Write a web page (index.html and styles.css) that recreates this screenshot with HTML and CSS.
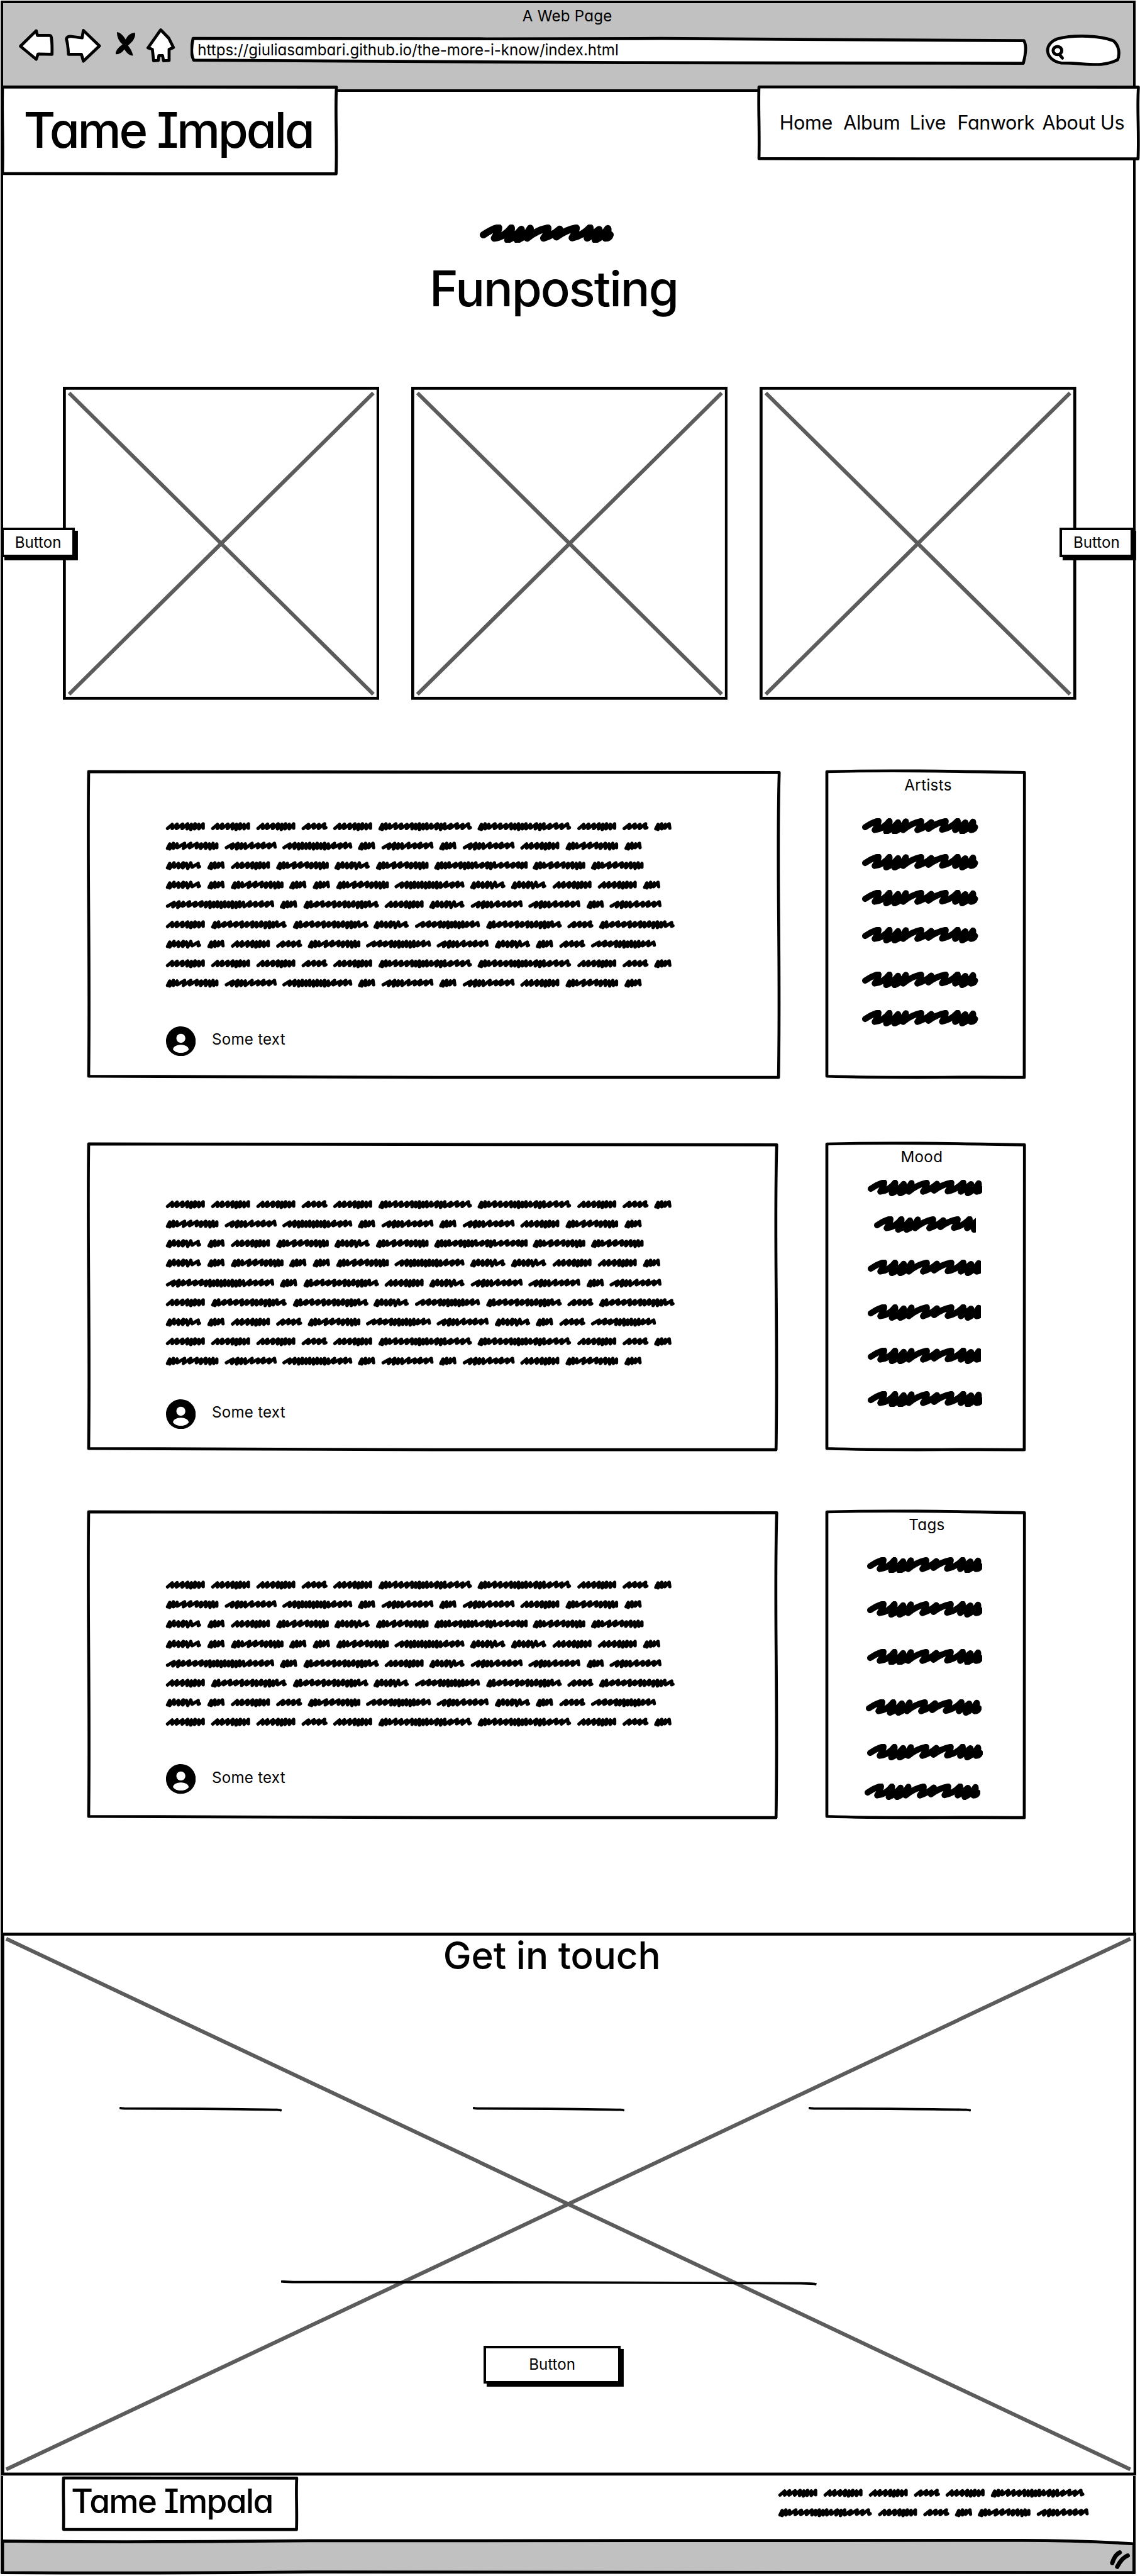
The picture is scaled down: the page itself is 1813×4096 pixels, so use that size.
FILE: index.html
```html
<!DOCTYPE html>
<html lang="en">
<head>
<meta charset="utf-8">
<title>A Web Page</title>
<link rel="stylesheet" href="styles.css">
</head>
<body>
<svg class="defs" aria-hidden="true">
  <defs>
    <symbol id="box" viewBox="0 0 100 100" preserveAspectRatio="none">
      <path class="ink-box" d="M0 .2C30 -.3 60 0 100 .5C99.6 30 100.2 60 99.9 100C60 99.7 40 100.4 0 99.6C.2 60 -.2 30 0 .2Z"/>
    </symbol>
    <symbol id="photo" viewBox="0 0 511 505" preserveAspectRatio="none">
      <path class="cross" d="M10 10L501 496M501 10L10 496"/>
      <rect class="frame" x="2.4" y="2.4" width="506.2" height="500.2"/>
    </symbol>
    <symbol id="rule" viewBox="0 0 100 8" preserveAspectRatio="none">
      <path class="rule-ink" d="M0 1.5Q1 2.5 3 2.7L50 3.2Q90 4.2 97 4.8Q99.5 5 100 6.5"/>
    </symbol>
    <symbol id="user" viewBox="2 2 20 20">
      <path d="M12 2C6.48 2 2 6.48 2 12s4.48 10 10 10 10-4.48 10-10S17.52 2 12 2zm0 5c1.66 0 3 1.34 3 3s-1.34 3-3 3-3-1.34-3-3 1.34-3 3-3zm0 12.8c-2.4 0-4.2-.9-5.3-2.3.2-1.9 2.5-3.1 5.3-3.1s5.1 1.2 5.3 3.1c-1.1 1.400-2.900 2.300-5.300 2.300z"/>
    </symbol>
    <path id="scrawl" class="scrawl-ink" d="M5.700 16.700Q22 6 30.600 5Q31 10 23.500 22Q40 20 51 5.300Q52 12 45 25Q57 20 67 7.700Q68 12 60.500 25Q74 20 81.500 6Q82 12 76.500 22Q92 9 110 5.500Q111 11 103 22Q117 18 129 7.500Q129 12 123.600 20Q140 8 155.800 5.500Q156 10 149 21.500Q166 18 178 5Q179 12 173.400 22Q184 16 192.500 8Q193 14 186.400 25Q198 20 206.700 6.500Q208 12 202.800 22Q209 22 210.500 16.500"/>
    <path id="wa" class="word" d="M2.500 10.500L10 4 10 10.500 18 3.500 17 10.500 27 3.500 26 10.500 35 3 34 11 41 4 40 12 47 3 46 11 53 4 53 11 60 3 60 10"/>
    <path id="wb" class="word" d="M2.500 10.500L11 4 10 10.500 20 3.500 19 10 28 4 27 10.500 37 3 36 10 39 9"/>
    <path id="wc" class="word" d="M2.500 11L6 4 6 12 12 3 12 11 18 4 18 10 28 3 27 10.500 37 3.500 36 10.500 46 4 45 10.500 54 3 54 11 60 4 60 11 66 3 66 12 72 4 72 11 78 3 78 11 85 4 85 10 95 3 93 11 101 4 100 12 107 3 107 11 117 4 115 10.500 127 3 126 10 136 4 135 10.500 145 3 146 10 148 9"/>
    <path id="wd" class="word" d="M2.500 11L6 4 6 12 12 3 12 11 18 4 18 10 30 3 28 11 40 3 38 10 50 3 49 10 57 4 56 11 64 3 64 11 70 4 71 12 76 3 77 11 82 4 82 10"/>
    <path id="we" class="word" d="M2.500 10L13 4 11 11 21 3 19 12 27 4 26 11 33 4 33 11 44 3 43 10 54 4 53 10 63 3 61 10 72 4 71 10 80 3 81 9"/>
    <path id="wf" class="word" d="M2.500 10L12 4 11 10.500 20 3 19 11 26 4 26 12 32 3 32 11 38 4 38 11 44 3 44 11 50 4 50 12 56 3 56 11 62 4 62 11 68 3 68 12 74 4 74 11 84 3 82 10 94 4 92 10.500 102 3 101 10 109 4 110 9"/>
    <path id="wg" class="word" d="M2.500 11L6 4 6 12 12 3 12 11 18 4 17 10 24 3 25 10"/>
    <path id="wh" class="word" d="M2.500 11L6 4 6 12 13 3 13 10 20 4 20 11 28 3 27 11 33 4 35 12 40 3 42 10 52 4 52 10 54 9"/>
    <path id="wi" class="word" d="M2.500 11L6 4 6 12 12 3 12 11 18 4 18 11 24 3 24 10 35 4 33 10 43 3 42 11 49 4 49 12 55 3 55 11 61 4 61 11 67 3 68 10 78 4 76 10 86 3 85 11 91 4 91 12 97 3 98 10 108 4 107 10 118 3 117 10 128 4 126 10 136 3 135 10 142 4 141 11 148 3 148 10"/>
    <path id="wj" class="word" d="M2.500 10L13 4 11 11 21 3 19 12 28 4 27 10 38 3 36 10 48 4 46 10 58 3 56 10 65 4 64 11 71 3 71 12 77 4 77 11 83 3 83 11 89 4 89 12 95 3 95 11 101 4 101 11 107 3 107 12 113 4 113 12 119 3 119 11 125 4 126 11 136 3 134 10 145 4 144 10 155 3 153 10 164 4 162 10 171 3 172 9"/>
    <path id="wk" class="word" d="M2.500 11L6 4 6 12 12 3 12 11 22 4 20 10 31 3 30 10 41 4 39 10 50 3 49 11 58 4 57 10 67 3 66 11 73 4 73 11 81 3 80 10 88 4 87 12 94 3 94 12 100 4 100 11 106 3 107 10 117 4 117 10 119 9"/>
    <path id="wl" class="word" d="M2.500 10L13 4 12 10 23 3 21 10 32 4 30 10 41 3 40 11 47 4 46 11 53 3 53 12 59 4 59 11 65 3 65 11 71 4 71 12 77 3 77 11 84 4 83 10 93 3 92 10 101 4 102 9"/>
    <g id="line1"><use href="#wa"/><use href="#wa" x="73"/><use href="#wa" x="146"/><use href="#wb" x="219"/><use href="#wa" x="270"/><use href="#wc" x="343"/><use href="#wc" x="503"/><use href="#wa" x="664"/><use href="#wb" x="737"/><use href="#wg" x="788"/></g>
    <g id="line2"><use href="#wd"/><use href="#we" x="95"/><use href="#wf" x="188"/><use href="#wg" x="310"/><use href="#we" x="348"/><use href="#wg" x="441"/><use href="#we" x="479"/><use href="#wa" x="572"/><use href="#wd" x="645"/><use href="#wg" x="740"/></g>
    <g id="line3"><use href="#wh"/><use href="#wg" x="67"/><use href="#wa" x="105"/><use href="#wd" x="178"/><use href="#wh" x="272"/><use href="#wd" x="339"/><use href="#wi" x="433"/><use href="#wd" x="592"/><use href="#wd" x="686"/></g>
    <g id="line4"><use href="#wh"/><use href="#wg" x="67"/><use href="#wd" x="105"/><use href="#wg" x="199"/><use href="#wg" x="237"/><use href="#wd" x="275"/><use href="#wf" x="369"/><use href="#wh" x="491"/><use href="#wh" x="557"/><use href="#wa" x="624"/><use href="#wa" x="697"/><use href="#wg" x="770"/></g>
    <g id="line5"><use href="#wj"/><use href="#wg" x="184"/><use href="#wk" x="222"/><use href="#wa" x="353"/><use href="#wh" x="425"/><use href="#we" x="492"/><use href="#we" x="585"/><use href="#wg" x="679"/><use href="#we" x="716"/></g>
    <g id="line6"><use href="#wa"/><use href="#wk" x="73"/><use href="#wk" x="205"/><use href="#wh" x="335"/><use href="#wl" x="402"/><use href="#wk" x="517"/><use href="#wb" x="648"/><use href="#wk" x="699"/></g>
    <g id="line7"><use href="#wh"/><use href="#wg" x="67"/><use href="#wa" x="105"/><use href="#wb" x="178"/><use href="#wd" x="229"/><use href="#wl" x="323"/><use href="#we" x="437"/><use href="#wh" x="531"/><use href="#wg" x="597"/><use href="#wb" x="635"/><use href="#wl" x="686"/></g>
  </defs>
</svg>

<div class="window">
  <header class="chrome">
    <div class="window-title">A Web Page</div>
    <div class="toolbar">
      <svg class="tool back" viewBox="30 44 60 64"><path class="icon" d="M33.500 75L59 50L61 57.500L80 57.500Q83 57.500 83.500 61Q85 72 84.500 88L62 87.500L59 96Z"/></svg>
      <svg class="tool forward" viewBox="104 44 62 64"><path class="icon" d="M111 88Q110 70 107.500 63Q109 59 114 59L133 61.500L135 49.500L161 74.500L135 99L132 88Z"/></svg>
      <svg class="tool stop" viewBox="185 44 38 64"><path d="M190 52Q198 53 204 64Q209 54 219 53Q221 59 215 67L208 74Q214 81 216 90Q209 91 202 80Q197 88 188 88Q187 81 199 72Q190 64 190 52Z"/></svg>
      <svg class="tool home" viewBox="235 44 50 64"><path class="icon" d="M260 48.500L239.500 77.500L246.500 80L248.500 98.500L256 98L257 90L263 90L264.500 98.500L273.500 98L273.500 80L280.500 77L273 62Z"/></svg>
      <div class="address">
        <svg class="address-box" viewBox="0 0 1352 64"><path class="icon" d="M4 18.500C300 18 500 20 760 18.500Q1000 19 1345 22Q1351 32 1344 58.500L700 57.500Q400 57 5 53.500Q-1 42 4 18.500Z"/></svg>
        <span class="url">https://giuliasambari.github.io/the-more-i-know/index.html</span>
      </div>
      <svg class="tool search" viewBox="1687 44 123 64"><path class="icon" d="M1713 102C1686 97 1684 71 1707 63C1735 56 1776 58 1797 66C1807 74 1808 88 1804 97C1778 110 1755 102 1713 102Z"/><ellipse class="lens" cx="1707" cy="82" rx="7" ry="6.500"/><path class="lens" d="M1710 88L1715 94"/></svg>
    </div>
  </header>

  <header class="site-header">
    <div class="panel logo"><svg class="sketch"><use href="#box"/></svg><span class="logo-text">Tame Impala</span></div>
    <nav class="panel nav"><svg class="sketch"><use href="#box"/></svg>
      <a>Home</a><a>Album</a><a>Live</a><a>Fanwork</a><a>About Us</a>
    </nav>
  </header>

  <section class="intro">
    <svg class="scrawl" viewBox="0 0 216 30"><use href="#scrawl"/></svg>
    <h1>Funposting</h1>
  </section>

  <section class="gallery">
    <svg class="photo"><use href="#photo"/></svg>
    <svg class="photo"><use href="#photo"/></svg>
    <svg class="photo"><use href="#photo"/></svg>
    <div class="button prev"><span>Button</span></div>
    <div class="button next"><span>Button</span></div>
  </section>

  <main class="posts">
    <article class="panel post post-1"><svg class="sketch"><use href="#box"/></svg>
      <div class="lines">
        <svg viewBox="0 0 830 14"><use href="#line1"/></svg>
        <svg viewBox="0 0 830 14"><use href="#line2"/></svg>
        <svg viewBox="0 0 830 14"><use href="#line3"/></svg>
        <svg viewBox="0 0 830 14"><use href="#line4"/></svg>
        <svg viewBox="0 0 830 14"><use href="#line5"/></svg>
        <svg viewBox="0 0 830 14"><use href="#line6"/></svg>
        <svg viewBox="0 0 830 14"><use href="#line7"/></svg>
        <svg viewBox="0 0 830 14"><use href="#line1"/></svg>
        <svg viewBox="0 0 830 14"><use href="#line2"/></svg>
      </div>
      <div class="author"><svg><use href="#user"/></svg><span>Some text</span></div>
    </article>
    <aside class="panel side artists"><svg class="sketch"><use href="#box"/></svg>
      <h2>Artists</h2>
      <div class="links">
        <svg viewBox="0 0 216 30"><use href="#scrawl"/></svg>
        <svg viewBox="0 0 216 30"><use href="#scrawl"/></svg>
        <svg viewBox="0 0 216 30"><use href="#scrawl"/></svg>
        <svg viewBox="0 0 216 30"><use href="#scrawl"/></svg>
        <svg viewBox="0 0 216 30"><use href="#scrawl"/></svg>
        <svg viewBox="0 0 216 30"><use href="#scrawl"/></svg>
      </div>
    </aside>

    <article class="panel post post-2"><svg class="sketch"><use href="#box"/></svg>
      <div class="lines">
        <svg viewBox="0 0 830 14"><use href="#line1"/></svg>
        <svg viewBox="0 0 830 14"><use href="#line2"/></svg>
        <svg viewBox="0 0 830 14"><use href="#line3"/></svg>
        <svg viewBox="0 0 830 14"><use href="#line4"/></svg>
        <svg viewBox="0 0 830 14"><use href="#line5"/></svg>
        <svg viewBox="0 0 830 14"><use href="#line6"/></svg>
        <svg viewBox="0 0 830 14"><use href="#line7"/></svg>
        <svg viewBox="0 0 830 14"><use href="#line1"/></svg>
        <svg viewBox="0 0 830 14"><use href="#line2"/></svg>
      </div>
      <div class="author"><svg><use href="#user"/></svg><span>Some text</span></div>
    </article>
    <aside class="panel side mood"><svg class="sketch"><use href="#box"/></svg>
      <h2>Mood</h2>
      <div class="links">
        <svg viewBox="0 0 213 30"><use href="#scrawl"/></svg>
        <svg class="short" viewBox="0 0 190 30"><use href="#scrawl"/></svg>
        <svg viewBox="0 0 211 30"><use href="#scrawl"/></svg>
        <svg viewBox="0 0 211 30"><use href="#scrawl"/></svg>
        <svg viewBox="0 0 211 30"><use href="#scrawl"/></svg>
        <svg viewBox="0 0 213 30"><use href="#scrawl"/></svg>
      </div>
    </aside>

    <article class="panel post post-3"><svg class="sketch"><use href="#box"/></svg>
      <div class="lines">
        <svg viewBox="0 0 830 14"><use href="#line1"/></svg>
        <svg viewBox="0 0 830 14"><use href="#line2"/></svg>
        <svg viewBox="0 0 830 14"><use href="#line3"/></svg>
        <svg viewBox="0 0 830 14"><use href="#line4"/></svg>
        <svg viewBox="0 0 830 14"><use href="#line5"/></svg>
        <svg viewBox="0 0 830 14"><use href="#line6"/></svg>
        <svg viewBox="0 0 830 14"><use href="#line7"/></svg>
        <svg viewBox="0 0 830 14"><use href="#line1"/></svg>
      </div>
      <div class="author"><svg><use href="#user"/></svg><span>Some text</span></div>
    </article>
    <aside class="panel side tags"><svg class="sketch"><use href="#box"/></svg>
      <h2>Tags</h2>
      <div class="links">
        <svg viewBox="0 0 215 30"><use href="#scrawl"/></svg>
        <svg viewBox="0 0 215 30"><use href="#scrawl"/></svg>
        <svg viewBox="0 0 215 30"><use href="#scrawl"/></svg>
        <svg class="nudge" viewBox="0 0 216 30"><use href="#scrawl"/></svg>
        <svg viewBox="0 0 216 30"><use href="#scrawl"/></svg>
        <svg class="nudge-more" viewBox="0 0 216 30"><use href="#scrawl"/></svg>
      </div>
    </aside>
  </main>

  <section class="contact">
    <svg class="backdrop" viewBox="0 0 1832 876"><path class="cross" d="M8 10L1822 866M1822 10L8 866"/><rect class="frame" x="2.400" y="2.400" width="1827.200" height="871.200"/></svg>
    <h2>Get in touch</h2>
    <div class="fields">
      <svg><use href="#rule"/></svg>
      <svg><use href="#rule"/></svg>
      <svg><use href="#rule"/></svg>
    </div>
    <svg class="message"><use href="#rule"/></svg>
    <div class="button send"><span>Button</span></div>
  </section>

  <footer class="site-footer">
    <div class="panel footer-logo"><svg class="sketch"><use href="#box"/></svg><span class="logo-text">Tame Impala</span></div>
    <div class="legal">
      <svg viewBox="0 0 510 14"><use href="#wa"/><use href="#wa" x="73"/><use href="#wa" x="146"/><use href="#wb" x="219"/><use href="#wa" x="270"/><use href="#wc" x="343"/></svg>
      <svg viewBox="0 0 510 14"><use href="#wc"/><use href="#wa" x="161"/><use href="#wb" x="234"/><use href="#wg" x="285"/><use href="#wd" x="322"/><use href="#we" x="417"/></svg>
    </div>
  </footer>

  <svg class="status-bar" viewBox="0 0 1840 62">
    <path d="M4 7.500Q200 10 500 7L1648 6.500Q1740 6.500 1830 12V58.500Q900 59.500 500 57.500Q250 60 4 58.500Z" class="status-ink"/>
    <path class="grip" d="M1807 26Q1799 30 1795 43M1820 31Q1811 34 1803 49"/>
  </svg>
</div>
</body>
</html>
```
FILE: styles.css
```css
html {
  font-size: 9.855px;
  background: #fff;
  overflow: hidden;
}

* { box-sizing: border-box; }

body {
  margin: 0;
  color: #000;
  font-family: Inter, "Open Sans", sans-serif;
  font-feature-settings: "cv11", "cv08";
  font-size: 2.45rem;
  font-weight: 400;
  line-height: 3rem;
}

svg { display: block; flex: none; }
symbol { overflow: visible; }
h1, h2 { margin: 0; font-weight: 500; }
.defs { position: absolute; width: 0; height: 0; }

/* ink */
.ink-box { fill: #fff; stroke: #000; stroke-width: 4.7px; stroke-linejoin: round; vector-effect: non-scaling-stroke; }
.frame { fill: none; stroke: #000; stroke-width: 4.8; }
.cross { fill: none; stroke: #5c5c5c; stroke-width: 6.2; }
.rule-ink { fill: none; stroke: #000; stroke-width: 3.8px; vector-effect: non-scaling-stroke; }
.scrawl-ink { fill: none; stroke: #000; stroke-width: 11.4; stroke-linecap: round; stroke-linejoin: round; }
.word { fill: none; stroke: #000; stroke-width: 5.4; stroke-linecap: round; stroke-linejoin: round; }
.icon { fill: #fff; stroke: #000; stroke-width: 4.8; stroke-linejoin: round; }
.lens { fill: none; stroke: #000; stroke-width: 5; stroke-linecap: round; }

/* window */
.window {
  position: relative;
  display: flex;
  flex-direction: column;
  width: 184rem;
  height: 415.6rem;
}
.window::before {
  content: "";
  position: absolute;
  z-index: -1;
  inset: .1rem .75rem .4rem .15rem;
  border: .5rem solid #000;
}

.chrome {
  height: 14.75rem;
  margin: .1rem .75rem 0 .15rem;
  padding-top: .6rem;
  border: .5rem solid #000;
  background: #c1c1c1;
}
.window-title { text-align: center; padding-right: .3rem; letter-spacing: .01em; }
.toolbar { display: flex; height: 6.4rem; margin-top: .3rem; padding-left: 2.35rem; }
.tool { height: 6.4rem; }
.back { width: 6rem; }
.forward { width: 6.2rem; margin-left: 1.4rem; }
.stop { width: 3.8rem; margin-left: 1.9rem; }
.home { width: 5rem; margin-left: 1.2rem; }
.search { width: 12.3rem; margin-left: 2.7rem; }
.address { position: relative; width: 135.2rem; margin-left: 2.3rem; padding: 2.2rem 0 0 1.2rem; }
.address-box { position: absolute; inset: 0; width: 100%; height: 100%; }
.url { position: relative; letter-spacing: -.002em; white-space: nowrap; }

.panel { position: relative; flex: none; }
.sketch {
  position: absolute;
  top: .23rem;
  left: .23rem;
  z-index: 0;
  width: calc(100% - .46rem);
  height: calc(100% - .46rem);
  overflow: visible;
}
.panel > :not(.sketch) { position: relative; }

.site-header {
  display: flex;
  justify-content: space-between;
  align-items: flex-start;
  height: 14.5rem;
  margin: -1.05rem .1rem 0 .2rem;
}
.logo { width: 54.35rem; height: 14.5rem; padding: 3.2rem 0 0 3.6rem; }
.logo-text { display: block; font-size: 7.9rem; line-height: 8rem; font-weight: 500; letter-spacing: -.043em; white-space: nowrap; }
.nav {
  display: grid;
  grid-template-columns: 10.3rem 10.7rem 7.7rem 13.7rem 14rem;
  width: 61.7rem;
  height: 12.1rem;
  padding: 3.95rem 0 0 3.6rem;
  font-size: 3.1rem;
  line-height: 4rem;
  letter-spacing: -.012em;
  white-space: nowrap;
}

.intro { padding-top: 7.9rem; height: 34.1rem; }
.scrawl { width: 21.6rem; height: 3rem; margin-left: 77.4rem; }
.intro h1 { margin: 3.4rem 0 0 69.3rem; font-size: 7.9rem; line-height: 8rem; letter-spacing: -.026em; }

.gallery { position: relative; display: flex; gap: 5.15rem; height: 50.5rem; padding-left: 10.1rem; }
.photo { width: 51.1rem; height: 50.5rem; }

.button {
  display: flex;
  align-items: center;
  justify-content: center;
  border: .45rem solid #000;
  border-width: .45rem .45rem .5rem;
  background: #fff;
  box-shadow: .5rem .5rem #000;
}
.prev, .next { position: absolute; top: 22.7rem; height: 4.8rem; }
.prev { left: .2rem; width: 11.9rem; }
.next { left: 171rem; width: 11.9rem; }

.posts {
  display: grid;
  grid-template-columns: 119.2rem 32.35rem;
  grid-template-rows: 60rem 59.4rem 49.9rem;
  margin: 11.3rem 0 0 14.05rem;
}
.post { display: flex; flex-direction: column; width: 111.5rem; padding-left: 12.75rem; }
.post-1 { width: 111.9rem; padding-top: 8.4rem; padding-bottom: 3.75rem; }
.post-2 { padding-top: 9.4rem; padding-bottom: 3.6rem; }
.post-3 { padding-top: 11.4rem; padding-bottom: 4.1rem; }
.post, .side { height: 49.9rem; }
.lines { display: flex; flex-direction: column; gap: 1.764rem; }
.lines svg { width: 83rem; height: 1.4rem; overflow: visible; }
.author { display: flex; gap: 2.6rem; margin-top: auto; height: 4.75rem; }
.author svg { width: 4.8rem; height: 4.8rem; }
.author span { margin-top: .66rem; letter-spacing: .01em; }

.side { padding-top: 1rem; }
.side h2 { font-size: 2.45rem; line-height: 3rem; font-weight: 400; letter-spacing: .015em; }
.links { display: grid; align-items: start; margin-left: 6.8rem; }
.links svg { height: 2.6rem; width: auto; }
.artists h2 { padding-left: 12.7rem; }
.artists .links { margin: 3.8rem 0 0 5.9rem; grid-template-rows: 5.82rem 5.8rem 5.95rem 7.2rem 6.2rem 2.6rem; }
.mood h2 { padding-left: 12.1rem; }
.mood .links { margin-top: 2.2rem; grid-template-rows: 5.9rem 7rem 7.16rem 7rem 6.97rem 2.6rem; }
.mood .short { margin-left: 1rem; }
.tags h2 { padding-left: 13.4rem; }
.tags .links { margin: 3.6rem 0 0 6.65rem; grid-template-rows: 7.18rem 7.64rem 8.18rem 7.21rem 6.4rem 2.6rem; }
.nudge { margin-left: -.2rem; }
.nudge-more { margin-left: -.4rem; }

.contact { position: relative; width: 183.2rem; height: 87.6rem; margin: 18.35rem 0 0 .2rem; padding-top: .56rem; background: #fff; }
.backdrop { position: absolute; inset: 0; width: 100%; height: 100%; }
.contact > :not(.backdrop) { position: relative; }
.contact h2 { padding-left: 71.3rem; font-size: 6.1rem; line-height: 6.2rem; letter-spacing: -.002em; }
.fields { display: grid; grid-template-columns: 57.05rem 54.2rem 26.3rem; margin: 21.3rem 0 0 19.05rem; }
.fields svg { width: 26.2rem; height: .8rem; }
.fields svg:nth-child(2) { width: 24.5rem; }
.message { width: 86.4rem; height: .8rem; margin: 27.2rem 0 0 45.2rem; }
.send { width: 22.2rem; height: 6.1rem; margin: 9.8rem 0 0 77.8rem; }

.site-footer { display: flex; justify-content: space-between; align-items: flex-start; height: 9.8rem; padding: .1rem 7.4rem 0 10rem; }
.footer-logo { width: 38.1rem; height: 8.8rem; padding: 1.15rem 0 0 1.5rem; }
.footer-logo .logo-text { font-size: 5.4rem; line-height: 5.6rem; letter-spacing: -.033em; }
.legal { display: grid; gap: 1.77rem; padding-top: 1.95rem; }
.legal svg { width: 51rem; height: 1.4rem; overflow: visible; }

.status-bar { width: 184rem; height: 6.2rem; }
.status-ink { fill: #c1c1c1; stroke: #000; stroke-width: 4.8; }
.grip { fill: none; stroke: #000; stroke-width: 7; stroke-linecap: round; }
```
